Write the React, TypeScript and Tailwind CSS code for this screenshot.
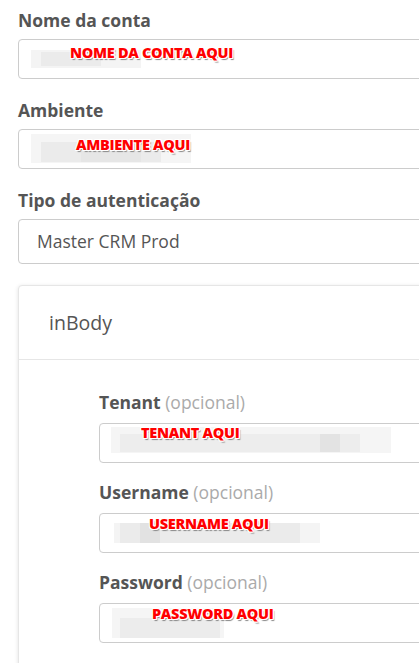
import React from "react";

const font = { fontFamily: '"Open Sans", "Noto Sans", sans-serif' };

function Redact({ text, textLeft, textTop, blocks }: { text: string; textLeft: number; textTop: number; blocks: { l: number; t: number; w: number; h: number; c: string }[] }) {
  return (
    <>
      {blocks.map((b, i) => (
        <div key={i} className="absolute" style={{ left: b.l, top: b.t, width: b.w, height: b.h, background: b.c }} />
      ))}
      <span
        className="absolute whitespace-nowrap text-[14.5px] font-extrabold leading-none text-[#ff0000] tracking-[-0.3px]"
        style={{ left: textLeft, top: textTop, textShadow: "1px 1px 0 #fff, -1px -1px 0 #fff, 1px -1px 0 #fff, -1px 1px 0 #fff, 0 1px 0 #fff, 1px 0 0 #fff, 1.5px 1.5px 1px #888" }}
      >
        {text}
      </span>
    </>
  );
}

function Label({ children, opt }: { children: React.ReactNode; opt?: boolean }) {
  return (
    <div className="text-[17.5px] leading-[24px] font-bold text-[#555]">
      {children}
      {opt && <span className="font-normal text-[#aaa]"> (opcional)</span>}
    </div>
  );
}

export default function App() {
  return (
    <div className="w-[419px] h-[663px] overflow-hidden bg-white" style={font}>
      <div className="w-[520px] pl-[18px] pt-[8px]">
        <Label>Nome da conta</Label>
        <div className="relative mt-[7px] h-[40px] rounded-[4px] border border-[#ccc] bg-white">
          <Redact
            text="NOME DA CONTA AQUI"
            textLeft={51}
            textTop={6}
            blocks={[
              { l: 12, t: 10, w: 110, h: 18, c: "#f4f4f4" },
              { l: 22, t: 12, w: 60, h: 14, c: "#ebebeb" },
            ]}
          />
        </div>

        <div className="mt-[19px]">
          <Label>Ambiente</Label>
        </div>
        <div className="relative mt-[7px] h-[40px] rounded-[4px] border border-[#ccc] bg-white">
          <Redact
            text="AMBIENTE AQUI"
            textLeft={57}
            textTop={8}
            blocks={[
              { l: 12, t: 4, w: 160, h: 29, c: "#f5f5f5" },
              { l: 22, t: 12, w: 120, h: 20, c: "#ebebeb" },
              { l: 62, t: 14, w: 60, h: 18, c: "#e6e6e6" },
            ]}
          />
        </div>

        <div className="mt-[19px]">
          <Label>Tipo de autenticação</Label>
        </div>
        <div className="mt-[7px] flex h-[45px] items-center rounded-[4px] border border-[#ccc] bg-white pl-[18px] text-[17.5px] text-[#555]">
          Master CRM Prod
        </div>

        <div className="mt-[21px] rounded-[4px] border border-[#e6e6e6] bg-white shadow-[0_1px_4px_rgba(0,0,0,0.12)]">
          <div className="flex h-[74px] items-center border-b border-[#e6e6e6] pl-[30px] text-[19.5px] text-[#555]">inBody</div>
          <div className="pl-[80px] pt-[30px] pb-[40px]">
            <Label opt>Tenant</Label>
            <div className="relative mt-[9px] h-[40px] rounded-[4px] border border-[#ccc] bg-white">
              <Redact
                text="TENANT AQUI"
                textLeft={41}
                textTop={2}
                blocks={[
                  { l: 11, t: 3, w: 280, h: 26, c: "#f5f5f5" },
                  { l: 20, t: 10, w: 240, h: 18, c: "#ededed" },
                  { l: 220, t: 10, w: 20, h: 18, c: "#e3e3e3" },
                ]}
              />
            </div>
            <div className="mt-[17px]">
              <Label opt>Username</Label>
            </div>
            <div className="relative mt-[9px] h-[40px] rounded-[4px] border border-[#ccc] bg-white">
              <Redact
                text="USERNAME AQUI"
                textLeft={49}
                textTop={3}
                blocks={[
                  { l: 14, t: 9, w: 206, h: 20, c: "#f4f4f4" },
                  { l: 20, t: 9, w: 180, h: 20, c: "#ebebeb" },
                  { l: 40, t: 9, w: 20, h: 20, c: "#e2e2e2" },
                ]}
              />
            </div>
            <div className="mt-[17px]">
              <Label opt>Password</Label>
            </div>
            <div className="relative mt-[9px] h-[40px] rounded-[4px] border border-[#ccc] bg-white">
              <Redact
                text="PASSWORD AQUI"
                textLeft={52}
                textTop={3}
                blocks={[
                  { l: 12, t: 4, w: 112, h: 30, c: "#f5f5f5" },
                  { l: 20, t: 14, w: 100, h: 20, c: "#ececec" },
                ]}
              />
            </div>
          </div>
        </div>
      </div>
    </div>
  );
}
